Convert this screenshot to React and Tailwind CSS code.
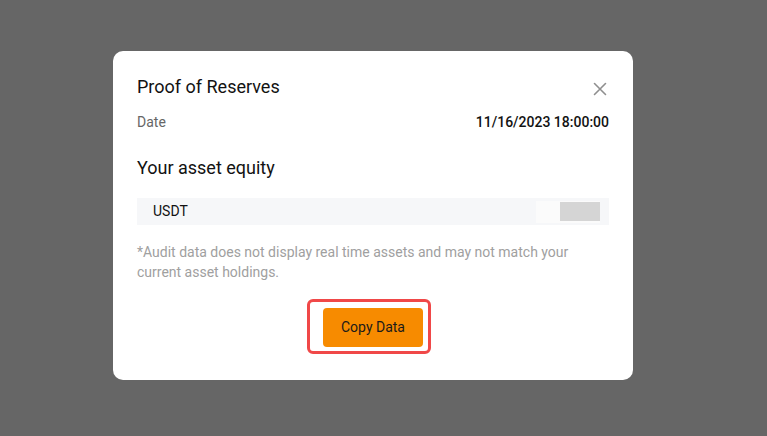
import React from 'react';

const CloseIcon = () => (
  <svg width="14" height="14" viewBox="0 0 14 14" fill="none">
    <path d="M1.5 1.5l11 11M12.5 1.5l-11 11" stroke="#8f8f8f" strokeWidth="1.6" strokeLinecap="round" />
  </svg>
);

export default function App() {
  return (
    <div className="w-full h-[436px] bg-[#666666] pt-[51px] pl-[113px] font-['Roboto',sans-serif]">
      <div className="w-[520px] h-[329px] bg-white rounded-[10px] px-6 pt-[20px] flex flex-col">
        <div className="flex items-center justify-between h-[26px] mt-[2px]">
          <h1 className="text-[18px] text-[#121212] font-normal">Proof of Reserves</h1>
          <button className="pr-[2px] pt-[5px]"><CloseIcon /></button>
        </div>
        <div className="flex items-center justify-between mt-[13px] h-[20px] text-[14px]">
          <span className="text-[#666]">Date</span>
          <span className="text-[#121212] font-medium">11/16/2023 18:00:00</span>
        </div>
        <h2 className="mt-[23px] h-[26px] text-[18px] font-normal text-[#121212] leading-[26px]">Your asset equity</h2>
        <div className="mt-[17px] h-[27px] bg-[#f6f7f9] flex items-center justify-between pl-4 pr-[9px]">
          <span className="text-[14px] text-[#121212]">USDT</span>
          <div className="flex items-center bg-[#fbfbfb] h-[22px] pl-6">
            <div className="w-10 h-[19px] bg-[#d5d5d5]" />
          </div>
        </div>
        <p className="mt-[17px] text-[14px] leading-[20px] text-[#a0a0a0] pr-8">
          *Audit data does not display real time assets and may not match your current asset holdings.
        </p>
        <div className="flex justify-center mt-[26px]">
          <div className="relative">
            <button className="w-[100px] h-[39px] bg-[#f78b00] rounded-[4px] text-[14px] text-[#1a1a1a]">Copy Data</button>
            <div className="absolute left-[-16px] right-[-8px] top-[-9px] bottom-[-7px] border-[3px] border-[#f04848] rounded-[6px]" />
          </div>
        </div>
      </div>
    </div>
  );
}
